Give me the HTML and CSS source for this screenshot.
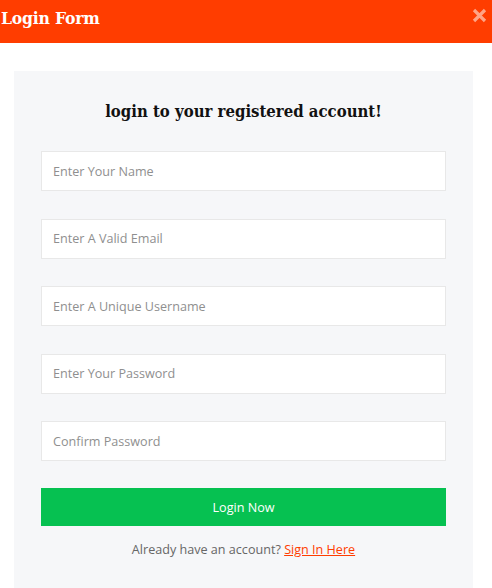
FILE: index.html
```html
<!DOCTYPE html>
<html>
<head>
<meta charset="utf-8">
<link rel="stylesheet" href="styles.css">
</head>
<body>
<header class="topbar">
  <h1 class="title">Login Form</h1>
  <span class="close">
    <svg width="15" height="15" viewBox="0 0 15 15"><path d="M2 2L13 13M13 2L2 13" stroke="currentColor" stroke-width="3.2" stroke-linecap="butt"/></svg>
  </span>
</header>
<main class="card">
  <h2 class="heading">login to your registered account!</h2>
  <form class="form">
    <input class="field" type="text" placeholder="Enter Your Name">
    <input class="field" type="email" placeholder="Enter A Valid Email">
    <input class="field" type="text" placeholder="Enter A Unique Username">
    <input class="field" type="password" placeholder="Enter Your Password">
    <input class="field" type="password" placeholder="Confirm Password">
    <button class="btn" type="button">Login Now</button>
  </form>
  <p class="foot">Already have an account? <a href="#" class="link">Sign In Here</a></p>
</main>
</body>
</html>
```
FILE: styles.css
```css
html, body { margin: 0; padding: 0; background: #fff; }
body { font-family: "Open Sans", sans-serif; width: 492px; height: 588px; overflow: hidden; }
.topbar {
  height: 43px;
  background: #ff3d00;
  display: flex;
  align-items: center;
  justify-content: space-between;
  padding: 0 5px 0 1px;
}
.title {
  margin: 0;
  color: #fff;
  font-family: "DejaVu Serif", serif;
  font-weight: bold;
  font-stretch: condensed;
  font-size: 17.4px;
  letter-spacing: -0.2px;
  position: relative;
  top: -4px;
}
.close { color: #ffa485; display: flex; position: relative; top: -6px; }
.card {
  margin: 28px 0 0 14px;
  width: 405px;
  padding: 28px 27px 30px;
  background: #f6f7f9;
}
.heading {
  margin: 0;
  text-align: center;
  font-family: "DejaVu Serif", serif;
  font-weight: bold;
  font-stretch: condensed;
  font-size: 16.6px;
  line-height: 24px;
  color: #111;
}
.form {
  margin-top: 28px;
  display: flex;
  flex-direction: column;
  gap: 27.5px;
}
.field {
  box-sizing: border-box;
  height: 40px;
  width: 100%;
  border: 1px solid #e8e8e8;
  background: #fff;
  padding: 0 11px;
  font-family: "Open Sans", sans-serif;
  font-size: 12.6px;
  color: #333;
  outline: none;
}
.field::placeholder { color: #8f8f8f; }
.btn {
  height: 38px;
  border: 0;
  margin-top: -0.5px;
  background: #06c151;
  color: #fff;
  font-family: "Open Sans", sans-serif;
  font-size: 12.6px;
}
.foot {
  margin: 15px 0 0;
  text-align: center;
  font-size: 12.6px;
  line-height: 18px;
  color: #666;
}
.link { color: #ff3d00; }
```
